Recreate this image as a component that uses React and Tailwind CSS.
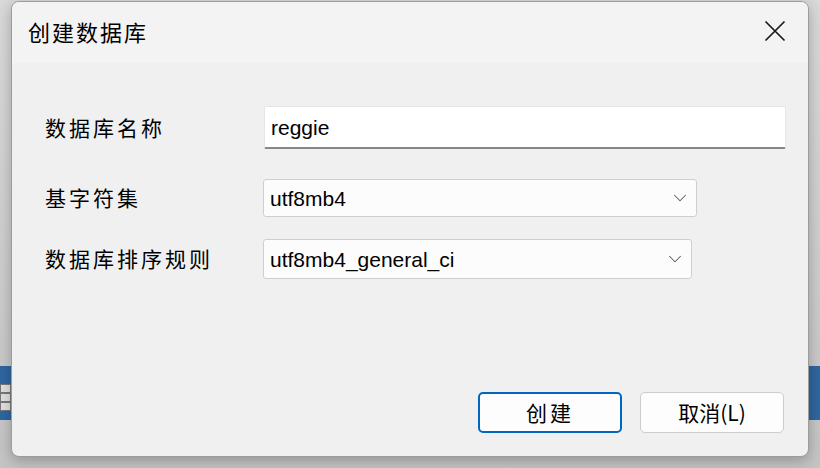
import { ChevronDown } from "lucide-react";

const cjk = { fontFamily: '"Noto Sans CJK SC", "Noto Sans", sans-serif' };
const latin = { fontFamily: '"Liberation Sans", "Noto Sans CJK SC", sans-serif' };

function Combo({ value, width }) {
  return (
    <div
      className={`flex items-center justify-between h-full bg-[#fcfcfc] border border-[#cfcfcf] rounded-[3px] pl-[6px] pr-[5px] ${width}`}
    >
      <span className="text-[21px] text-black leading-none" style={latin}>{value}</span>
      <ChevronDown className="w-[22px] h-[22px] text-[#5a5a5a]" strokeWidth={1.1} />
    </div>
  );
}

export default function App() {
  return (
    <div className="relative w-[820px] h-[468px] overflow-hidden bg-gradient-to-b from-[#d9d9d9] to-[#c4c4c4]">
      {/* app window peeking from behind */}
      <div className="absolute left-0 right-0 top-[366px] h-[54px] bg-[#2f66a0]">
        <div className="grid grid-cols-1 gap-[2px] w-[11px] mt-[18px] bg-[#777] p-[1px]">
          <div className="h-[7px] bg-[#e0e0e0]"></div>
          <div className="h-[7px] bg-[#e0e0e0]"></div>
          <div className="h-[7px] bg-[#e0e0e0]"></div>
        </div>
      </div>

      <div className="relative pt-[1px] px-[11px]">
        <div className="w-[798px] h-[456px] bg-[#f0f0f0] border border-[#9c9c9c] rounded-[8px] overflow-hidden shadow-[0_4px_14px_rgba(0,0,0,0.25)] flex flex-col">
          {/* title bar */}
          <div className="h-[61px] bg-[#f3f3f3] flex items-center justify-between pl-[16px] pr-[22px]" style={cjk}>
            <span className="text-[22px] text-black tracking-[2px] mt-[-2px]">创建数据库</span>
            <svg width="22" height="22" viewBox="0 0 22 22" className="mt-[-3px]">
              <path d="M1.5 1.5 L20.5 20.5 M20.5 1.5 L1.5 20.5" stroke="#1a1a1a" strokeWidth="1.7" fill="none" />
            </svg>
          </div>

          {/* form */}
          <div className="flex flex-col pl-[33px] pt-[43px]">
            <div className="flex items-center h-[43px]">
              <span className="w-[219px] text-[21px] text-black tracking-[3px]" style={cjk}>数据库名称</span>
              <div className="w-[522px] h-full bg-white border border-[#e6e6e6] border-b-2 border-b-[#878787] rounded-[2px] flex items-center pl-[6px]">
                <span className="text-[21px] text-black leading-none" style={latin}>reggie</span>
              </div>
            </div>
            <div className="flex items-center h-[38px] mt-[30px]">
              <span className="w-[218px] text-[21px] text-black tracking-[3px]" style={cjk}>基字符集</span>
              <Combo value="utf8mb4" width="w-[434px]" />
            </div>
            <div className="flex items-center h-[40px] mt-[22px]">
              <span className="w-[218px] text-[21px] text-black tracking-[3px]" style={cjk}>数据库排序规则</span>
              <Combo value="utf8mb4_general_ci" width="w-[429px]" />
            </div>
          </div>

          {/* buttons */}
          <div className="mt-auto flex justify-end gap-[18px] pr-[24px] pb-[23px]" style={cjk}>
            <button className="w-[144px] h-[41px] bg-[#fdfdfd] border-2 border-[#0067c0] rounded-[5px] text-[21px] text-black tracking-[3px]">
              创建
            </button>
            <button className="w-[144px] h-[41px] bg-[#fdfdfd] border border-[#cccccc] rounded-[5px] text-[21px] text-black">
              取消(L)
            </button>
          </div>
        </div>
      </div>
    </div>
  );
}
